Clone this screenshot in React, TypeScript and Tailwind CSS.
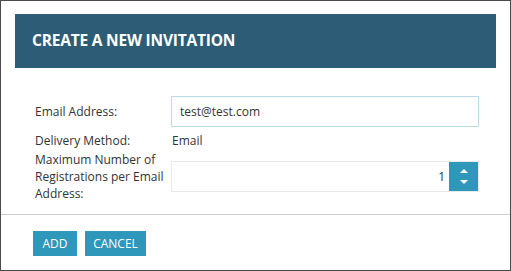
import React from 'react';

const App: React.FC = () => {
  return (
    <div
      className="w-[511px] h-[271px] border border-[#4a4a4a] bg-white flex flex-col text-[#333333]"
      style={{ fontFamily: '"Open Sans", "Liberation Sans", sans-serif' }}
    >
      <div className="mx-[14px] mt-[13px] h-[54px] bg-[#2d5c77] flex items-center px-[17px]">
        <h2 className="text-white text-[15.5px] font-bold tracking-[-0.2px]">CREATE A NEW INVITATION</h2>
      </div>

      <div className="pl-[34px] pr-[31px] pt-[28px] text-[12px]">
        <div className="flex items-center h-[31px]">
          <label className="w-[136px] shrink-0">Email Address:</label>
          <input
            className="flex-1 h-[31px] border border-[#b9dbed] px-[8px] outline-none text-[12px] text-[#333333]"
            defaultValue="test@test.com"
          />
        </div>
        <div className="flex items-center h-[17px] mt-[5px]">
          <span className="w-[137px] shrink-0">Delivery Method:</span>
          <span>Email</span>
        </div>
        <div className="flex items-center mt-[2px]">
          <label className="w-[136px] shrink-0 leading-[17px]">
            Maximum Number of Registrations per Email Address:
          </label>
          <div className="flex-1 flex h-[31px] border border-[#e6eaeb]">
            <input
              className="flex-1 min-w-0 px-[4px] text-right outline-none text-[12px] text-[#333333]"
              defaultValue="1"
            />
            <div className="w-[29px] bg-[#2e97ba] flex flex-col items-center justify-center gap-[7px]">
              <svg width="8" height="4" viewBox="0 0 8 4">
                <path d="M0 4 L4 0 L8 4 Z" fill="white" />
              </svg>
              <svg width="8" height="4" viewBox="0 0 8 4">
                <path d="M0 0 L4 4 L8 0 Z" fill="white" />
              </svg>
            </div>
          </div>
        </div>
      </div>

      <div className="mt-[12px] h-px bg-[#cccccc]" />

      <div className="flex gap-[8px] pl-[32px] pt-[16px]">
        <button className="h-[25px] w-[44px] bg-[#2e97ba] text-white text-[12px]">ADD</button>
        <button className="h-[25px] w-[61px] bg-[#2e97ba] text-white text-[12px]">CANCEL</button>
      </div>
    </div>
  );
};

export default App;
